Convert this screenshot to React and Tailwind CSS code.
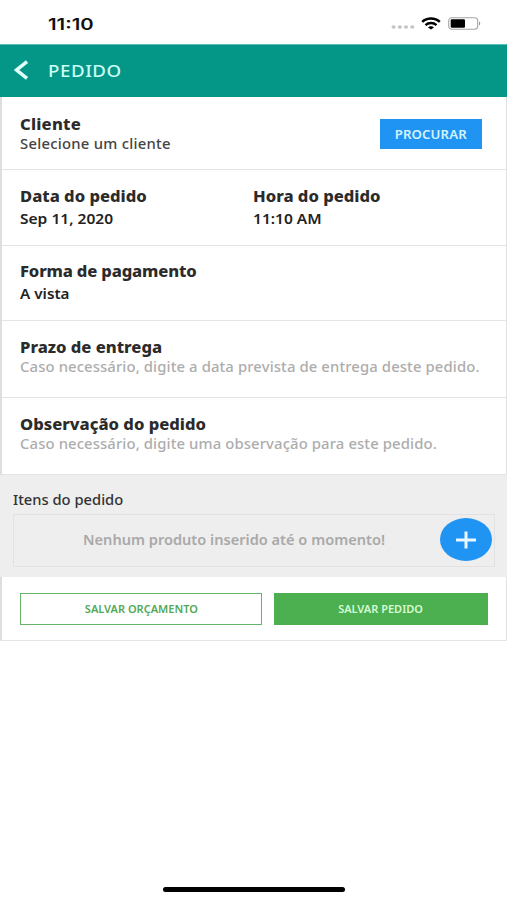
const text = "block w-max origin-left whitespace-nowrap";

function Title({ children, className = "" }) {
  return (
    <h2 className={`${text} scale-x-[1.07] text-[15.5px] leading-5 font-extrabold text-[#2b2b2b] ${className}`}>
      {children}
    </h2>
  );
}

function Line({ children, className = "" }) {
  return <p className={`${text} text-[13.5px] leading-5 ${className}`}>{children}</p>;
}

function StatusBar() {
  return (
    <div className="flex h-11 items-center bg-white pt-[3px] pr-[26px] pl-12">
      <span className="origin-left scale-x-[1.27] font-['Inter'] text-[16px] font-semibold text-[#111]">11:10</span>
      <div className="ml-auto flex items-center">
        <svg width="24" height="6" viewBox="0 0 24 6" className="mt-[7px] mr-[6px]">
          <g fill="#c4c4c4">
            <ellipse cx="2.6" cy="3" rx="2.1" ry="1.8" />
            <ellipse cx="8.8" cy="3" rx="2.1" ry="1.8" />
            <ellipse cx="15" cy="3" rx="2.1" ry="1.8" />
            <ellipse cx="21.2" cy="3" rx="2.1" ry="1.8" />
          </g>
        </svg>
        <svg width="20" height="13" viewBox="0 0 20 13" fill="none" stroke="#000" className="mr-[7px]">
          <path d="M1.2 4.9C6 .4 14 .4 18.8 4.9" strokeWidth="2.5" />
          <path d="M4.5 8.1c3-2.8 8-2.8 11 0" strokeWidth="2.3" />
          <path d="M10 12.6 7 10.4c1.5-1.7 4.5-1.7 6 0z" fill="#000" stroke="none" />
        </svg>
        <svg width="33" height="13" viewBox="0 0 33 13">
          <rect x=".7" y=".7" width="29" height="11.6" rx="3" fill="#fff" stroke="#a5a5a5" strokeWidth="1.1" />
          <rect x="2.7" y="2.3" width="14.3" height="8.4" rx="1.2" fill="#000" />
          <path d="M31 4.5c1.7.7 1.7 3.3 0 4z" fill="#999" />
        </svg>
      </div>
    </div>
  );
}

export default function App() {
  return (
    <main className="flex h-[900px] w-[507px] flex-col overflow-hidden bg-white font-['Noto_Sans','Open_Sans',sans-serif]">
      <StatusBar />
      <header className="flex h-[53px] items-center border-t border-[#58bdb2] bg-[#049687] pb-[2px] pl-[14px]">
        <svg width="15" height="20" viewBox="0 0 15 20" fill="none" stroke="#e2fffb" strokeWidth="3.5">
          <path d="M13 1.6 2.6 10 13 18.4" />
        </svg>
        <h1 className={`${text} mt-[2px] ml-[19px] scale-x-110 text-[17px] font-medium tracking-[0.5px] text-[#c9fff6]`}>PEDIDO</h1>
      </header>

      <div className="flex flex-col border-r border-l-2 border-r-[#e2e2e2] border-l-[#dedede]">
        <section className="flex h-[73px] justify-between border-b border-[#e4e4e4] pt-[17px] pr-6 pl-[18.4px]">
          <div>
            <Title className="tracking-[0.2px]">Cliente</Title>
            <Line className="scale-x-110 font-medium tracking-[0.22px] text-[#444]">Selecione um cliente</Line>
          </div>
          <button className="mt-[5px] flex h-[30px] w-[102px] items-center justify-center bg-[#2094f3]">
            <span className="mt-px scale-x-110 text-[12px] font-semibold tracking-[0.1px] text-[#d3f3ff]">PROCURAR</span>
          </button>
        </section>
        <section className="grid h-[76px] grid-cols-[233px_1fr] border-b border-[#e4e4e4] pt-4 pl-[18.4px]">
          <div>
            <Title>Data do pedido</Title>
            <Line className="mt-[3px] scale-x-[1.15] font-semibold text-[#222]">Sep 11, 2020</Line>
          </div>
          <div>
            <Title>Hora do pedido</Title>
            <Line className="mt-[3px] scale-x-[1.15] font-semibold text-[#222]">11:10 AM</Line>
          </div>
        </section>
        <section className="h-[75px] border-b border-[#e4e4e4] pt-[15px] pl-[18.4px]">
          <Title className="tracking-[-0.15px]">Forma de pagamento</Title>
          <Line className="mt-[3px] scale-x-[1.13] font-semibold text-[#222]">A vista</Line>
        </section>
        <section className="h-[77px] border-b border-[#e4e4e4] pt-4 pl-[18.4px]">
          <Title>Prazo de entrega</Title>
          <Line className="scale-x-110 font-medium tracking-[0.1px] text-[#adadad]">Caso necessário, digite a data prevista de entrega deste pedido.</Line>
        </section>
        <section className="h-[77px] border-b border-[#e4e4e4] pt-4 pl-[18.4px]">
          <Title>Observação do pedido</Title>
          <Line className="scale-x-110 font-medium tracking-[0.1px] text-[#adadad]">Caso necessário, digite uma observação para este pedido.</Line>
        </section>
      </div>

      <section className="h-[102px] bg-[#eeeeee] px-[13px] pt-[15px]">
        <Line className="scale-x-[1.09] font-medium text-[#333]">Itens do pedido</Line>
        <div className="mt-[4px] flex h-[53px] w-[482px] items-center justify-between border border-[#e2e2e2] pr-[2px] pl-[69px]">
          <Line className="mb-[2px] scale-x-[1.08] font-semibold text-[#a9a9a9]">Nenhum produto inserido até o momento!</Line>
          <button className="mb-[2px] flex h-[43px] w-[52px] items-center justify-center rounded-[50%] bg-[#2094f3]">
            <svg width="20" height="18" viewBox="0 0 20 18" stroke="#e8f8ff" strokeWidth="3">
              <path d="M0 9h20M10 .5v17" />
            </svg>
          </button>
        </div>
      </section>

      <section className="flex h-16 items-start gap-3 border-r border-b border-l-2 border-r-[#e2e2e2] border-b-[#e4e4e4] border-l-[#dedede] pt-4 pl-[18px]">
        <button className="flex h-8 w-[242px] items-center justify-center border-[1.5px] border-[#66b46a]">
          <span className="scale-x-110 text-[10px] font-semibold text-[#53a957]">SALVAR ORÇAMENTO</span>
        </button>
        <button className="flex h-8 w-[214px] items-center justify-center bg-[#4caf50]">
          <span className="scale-x-110 text-[10px] font-semibold text-[#d5fbd3]">SALVAR PEDIDO</span>
        </button>
      </section>

      <div className="mt-auto mb-[8px] ml-[163px] h-[5px] w-[182px] rounded-full bg-black" />
    </main>
  );
}
